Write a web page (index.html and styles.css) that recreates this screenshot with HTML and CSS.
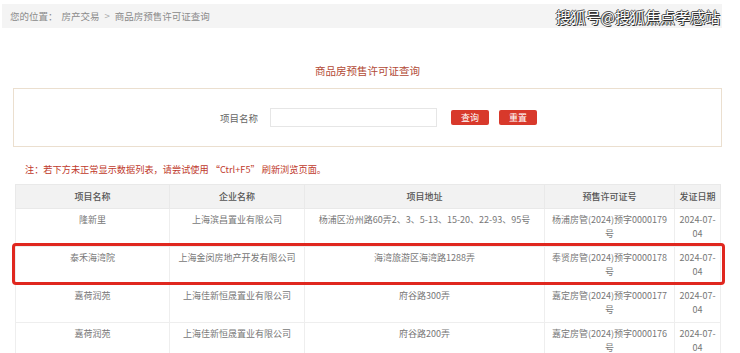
FILE: index.html
```html
<!DOCTYPE html>
<html lang="zh-CN">
<head>
    <meta charset="UTF-8">
    <meta name="viewport" content="width=device-width, initial-scale=1.0">
    <title>商品房预售许可证查询</title>
    <link rel="stylesheet" href="styles.css">
</head>
<body>
    <div class="crumbs">
        <span>您的位置：</span>
        <span class="crumb-link">房产交易</span>
        <span class="crumb-sep">&gt;</span>
        <span>商品房预售许可证查询</span>
        <span class="watermark">搜狐号@搜狐焦点孝感站</span>
    </div>

    <div class="main">
        <h2 class="title">商品房预售许可证查询</h2>

        <div class="search">
            <label for="projectName">项目名称</label>
            <input type="text" id="projectName">
            <button class="btn">查询</button>
            <button class="btn">重置</button>
        </div>

        <p class="note">注：若下方未正常显示数据列表，请尝试使用 “Ctrl+F5” 刷新浏览页面。</p>

        <div class="table-wrap">
            <table class="list">
                <colgroup>
                    <col class="c1"><col class="c2"><col class="c3"><col class="c4"><col class="c5">
                </colgroup>
                <thead>
                    <tr>
                        <th>项目名称</th>
                        <th>企业名称</th>
                        <th>项目地址</th>
                        <th>预售许可证号</th>
                        <th>发证日期</th>
                    </tr>
                </thead>
                <tbody>
                    <tr>
                        <td>隆新里</td>
                        <td>上海滨昌置业有限公司</td>
                        <td>杨浦区汾州路60弄2、3、5-13、15-20、22-93、95号</td>
                        <td>杨浦房管(2024)预字0000179号</td>
                        <td>2024-07-04</td>
                    </tr>
                    <tr>
                        <td>泰禾海湾院</td>
                        <td>上海金闵房地产开发有限公司</td>
                        <td>海湾旅游区海湾路1288弄</td>
                        <td>奉贤房管(2024)预字0000178号</td>
                        <td>2024-07-04</td>
                    </tr>
                    <tr>
                        <td>嘉荷润苑</td>
                        <td>上海佳新恒晟置业有限公司</td>
                        <td>府谷路300弄</td>
                        <td>嘉定房管(2024)预字0000177号</td>
                        <td>2024-07-04</td>
                    </tr>
                    <tr>
                        <td>嘉荷润苑</td>
                        <td>上海佳新恒晟置业有限公司</td>
                        <td>府谷路200弄</td>
                        <td>嘉定房管(2024)预字0000176号</td>
                        <td>2024-07-04</td>
                    </tr>
                </tbody>
            </table>
            <div class="highlight"></div>
        </div>
    </div>
</body>
</html>
```

FILE: styles.css
```css
body {
    margin: 0;
    padding: 4px 18px 0 2px;
    background: #fff;
    font-family: "Noto Sans CJK SC", "Microsoft YaHei", sans-serif;
    color: #666;
    overflow: hidden;
}
.crumbs {
    display: flex;
    align-items: center;
    height: 24px;
    padding: 0 2px 0 8px;
    background-color: #f4f4f4;
    font-size: 9.5px;
    color: #8a8a8a;
    white-space: nowrap;
}
.crumb-link {
    margin-left: 4px;
}
.crumb-sep {
    margin: 0 5px;
    color: #aaa;
}
.watermark {
    margin-left: auto;
    font-size: 15px;
    font-weight: normal;
    color: #fff;
    text-shadow: 0 0 1px #111, 1px 1px 0 #333, -1px 0 0 #666, 0 -1px 0 #666;
}
.main {
    margin-left: 11px;
    width: 709px;
}
.title {
    margin: 0;
    height: 60px;
    line-height: 86px;
    font-size: 10.5px;
    font-weight: normal;
    text-align: center;
    color: #b24a35;
}
.search {
    display: flex;
    align-items: center;
    height: 57px;
    padding-left: 206px;
    border: 1px solid #ebdfcf;
}
.search label {
    font-size: 9.5px;
    color: #666;
    margin-right: 12px;
}
.search input {
    width: 167px;
    height: 19px;
    padding: 0 4px;
    border: 1px solid #e6e6e6;
    box-sizing: border-box;
    margin-right: 14px;
}
.btn {
    width: 38px;
    height: 15px;
    padding: 0;
    margin-right: 10px;
    border: none;
    border-radius: 2px;
    background-color: #d8392b;
    color: #fff;
    font-family: inherit;
    font-size: 9px;
    line-height: 15px;
    cursor: pointer;
}
.note {
    margin: 0;
    height: 37px;
    line-height: 44px;
    padding-left: 12px;
    font-size: 9.2px;
    color: #c0392b;
    white-space: nowrap;
}
.table-wrap {
    position: relative;
    margin-left: 2px;
}
.list {
    width: 705px;
    border-collapse: collapse;
    table-layout: fixed;
    font-size: 9px;
}
.c1 { width: 154px; }
.c2 { width: 135px; }
.c3 { width: 240px; }
.c4 { width: 130px; }
.c5 { width: 46px; }
.list th {
    height: 23px;
    padding: 0;
    background-color: #f2f2f2;
    border: 1px solid #e9e9e9;
    font-weight: 500;
    color: #555;
    text-align: center;
}
.list td {
    height: 28px;
    padding: 4px 3px 5px;
    border: 1px solid #eeeeee;
    line-height: 14px;
    text-align: center;
    vertical-align: top;
    color: #777;
    word-break: break-all;
}
.highlight {
    position: absolute;
    left: -3px;
    top: 59px;
    width: 707px;
    height: 36px;
    border: 3px solid #e0271f;
    border-radius: 4px;
}
```
